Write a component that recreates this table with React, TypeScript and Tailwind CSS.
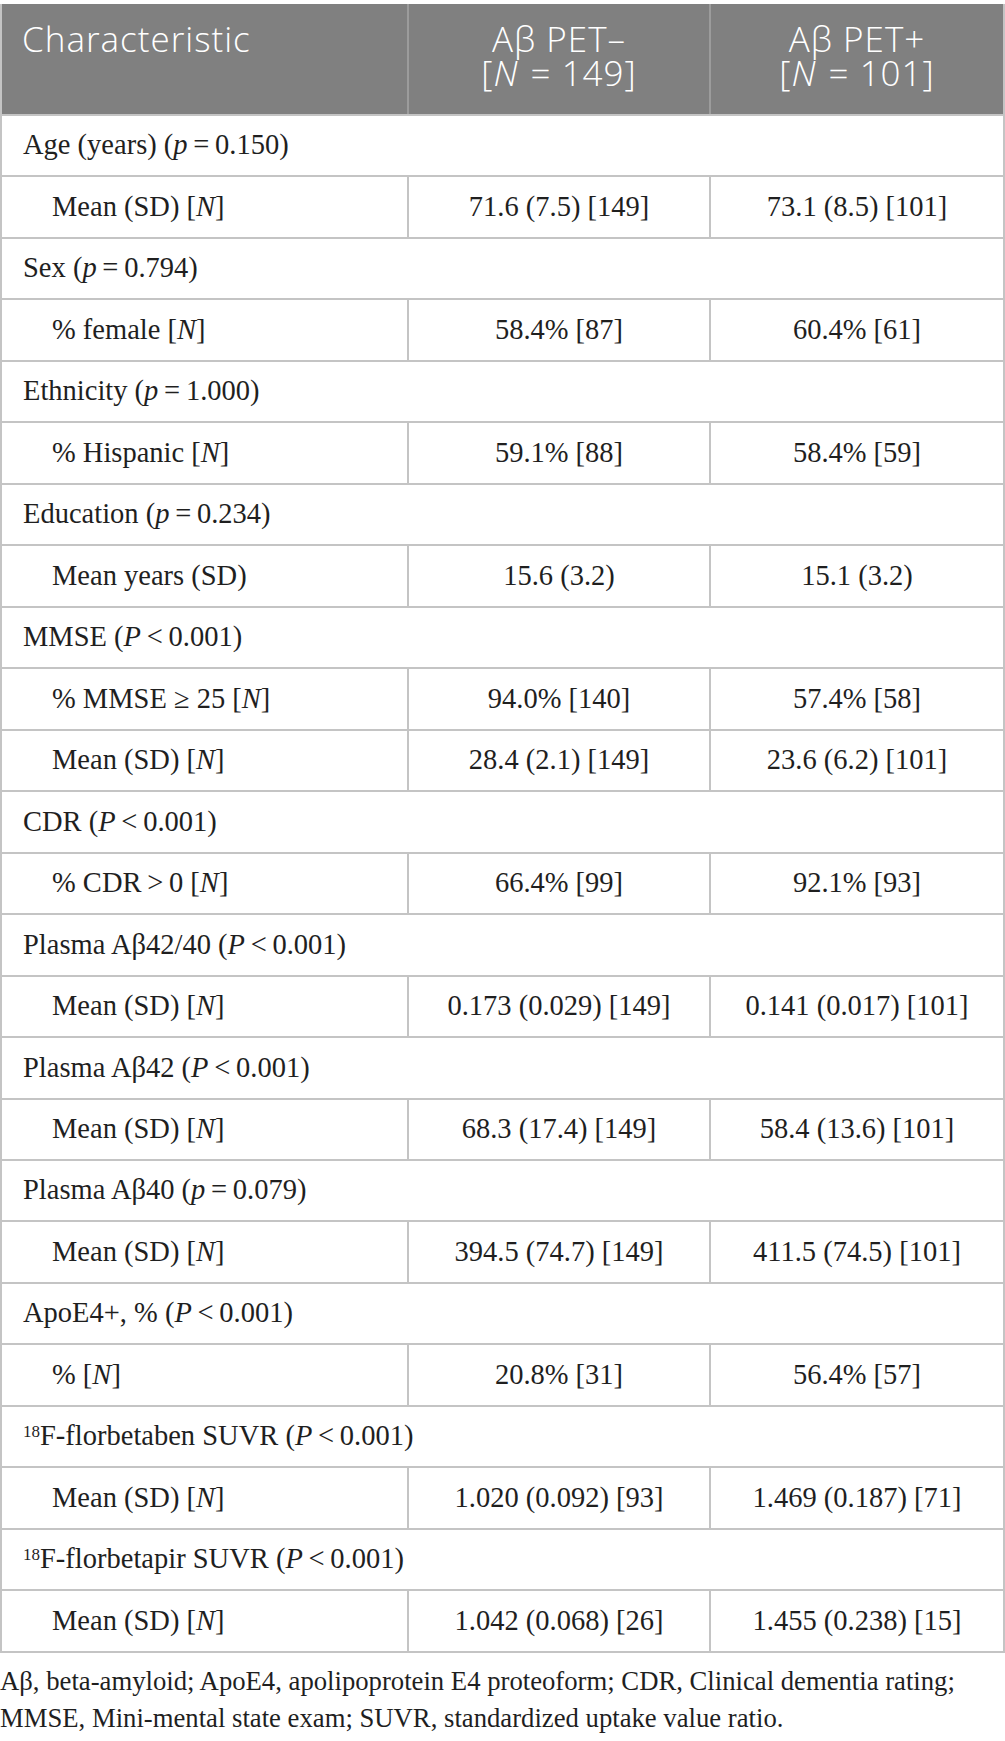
import React from "react";

type Row =
  | { kind: "group"; label: React.ReactNode }
  | { kind: "data"; label: React.ReactNode; neg: string; pos: string };

const T = "\u2009";

const P = ({ small }: { small?: boolean }) => <i>{small ? "p" : "P"}</i>;
const N = () => <i>N</i>;

const rows: Row[] = [
  { kind: "group", label: <>Age (years) (<P small />{T}={T}0.150)</> },
  { kind: "data", label: <>Mean (SD) [<N />]</>, neg: "71.6 (7.5) [149]", pos: "73.1 (8.5) [101]" },
  { kind: "group", label: <>Sex (<P small />{T}={T}0.794)</> },
  { kind: "data", label: <>% female [<N />]</>, neg: "58.4% [87]", pos: "60.4% [61]" },
  { kind: "group", label: <>Ethnicity (<P small />{T}={T}1.000)</> },
  { kind: "data", label: <>% Hispanic [<N />]</>, neg: "59.1% [88]", pos: "58.4% [59]" },
  { kind: "group", label: <>Education (<P small />{T}={T}0.234)</> },
  { kind: "data", label: <>Mean years (SD)</>, neg: "15.6 (3.2)", pos: "15.1 (3.2)" },
  { kind: "group", label: <>MMSE (<P />{T}&lt;{T}0.001)</> },
  { kind: "data", label: <>% MMSE ≥ 25 [<N />]</>, neg: "94.0% [140]", pos: "57.4% [58]" },
  { kind: "data", label: <>Mean (SD) [<N />]</>, neg: "28.4 (2.1) [149]", pos: "23.6 (6.2) [101]" },
  { kind: "group", label: <>CDR (<P />{T}&lt;{T}0.001)</> },
  { kind: "data", label: <>% CDR{T}&gt;{T}0 [<N />]</>, neg: "66.4% [99]", pos: "92.1% [93]" },
  { kind: "group", label: <>Plasma Aβ42/40 (<P />{T}&lt;{T}0.001)</> },
  { kind: "data", label: <>Mean (SD) [<N />]</>, neg: "0.173 (0.029) [149]", pos: "0.141 (0.017) [101]" },
  { kind: "group", label: <>Plasma Aβ42 (<P />{T}&lt;{T}0.001)</> },
  { kind: "data", label: <>Mean (SD) [<N />]</>, neg: "68.3 (17.4) [149]", pos: "58.4 (13.6) [101]" },
  { kind: "group", label: <>Plasma Aβ40 (<P small />{T}={T}0.079)</> },
  { kind: "data", label: <>Mean (SD) [<N />]</>, neg: "394.5 (74.7) [149]", pos: "411.5 (74.5) [101]" },
  { kind: "group", label: <>ApoE4+, % (<P />{T}&lt;{T}0.001)</> },
  { kind: "data", label: <>% [<N />]</>, neg: "20.8% [31]", pos: "56.4% [57]" },
  {
    kind: "group",
    label: (
      <>
        <sup className="text-[17px]">18</sup>F-florbetaben SUVR (<P />{T}&lt;{T}0.001)
      </>
    ),
  },
  { kind: "data", label: <>Mean (SD) [<N />]</>, neg: "1.020 (0.092) [93]", pos: "1.469 (0.187) [71]" },
  {
    kind: "group",
    label: (
      <>
        <sup className="text-[17px]">18</sup>F-florbetapir SUVR (<P />{T}&lt;{T}0.001)
      </>
    ),
  },
  { kind: "data", label: <>Mean (SD) [<N />]</>, neg: "1.042 (0.068) [26]", pos: "1.455 (0.238) [15]" },
];

const cols = "grid grid-cols-[405px_302px_1fr]";

export default function App() {
  return (
    <div className="w-[1005px] bg-white pt-[4px] font-['Liberation_Serif',serif] text-[#1f1f1f]">
      {/* Table */}
      <div className="border-x-2 border-[#c4c4c4]">
        {/* Header */}
        <div
          className={`${cols} h-[110px] bg-[#808080] font-['Open_Sans',sans-serif] text-[35px] font-light leading-[35px] tracking-[1px] text-white`}
        >
          <div className="pl-[20px] pt-[17px]">Characteristic</div>
          <div className="flex flex-col items-center gap-[0px] border-l-2 border-[#9c9c9c] pt-[17px]">
            <span>Aβ PET–</span>
            <span className="-mt-[1px]">
              [<i className="pr-[2px]">N</i> = 149]
            </span>
          </div>
          <div className="flex flex-col items-center gap-[0px] border-l-2 border-[#9c9c9c] pt-[17px]">
            <span>Aβ PET+</span>
            <span className="-mt-[1px]">
              [<i className="pr-[2px]">N</i> = 101]
            </span>
          </div>
        </div>

        {/* Body */}
        {rows.map((r, i) =>
          r.kind === "group" ? (
            <div
              key={i}
              className="flex h-[61.47px] items-center border-t-2 border-[#c4c4c4] pl-[21px] text-[28.5px] leading-none"
            >
              <span>{r.label}</span>
            </div>
          ) : (
            <div key={i} className={`${cols} h-[61.47px] border-t-2 border-[#c4c4c4] text-[28.5px] leading-none`}>
              <div className="flex items-center pl-[50px]">
                <span>{r.label}</span>
              </div>
              <div className="flex items-center justify-center border-l-2 border-[#c4c4c4]">{r.neg}</div>
              <div className="flex items-center justify-center border-l-2 border-[#c4c4c4]">{r.pos}</div>
            </div>
          )
        )}
        <div className="border-t-2 border-[#c4c4c4]" />
      </div>

      {/* Footnote */}
      <p className="mt-[10px] text-[26.7px] leading-[37px] text-[#1f1f1f]">
        Aβ, beta-amyloid; ApoE4, apolipoprotein E4 proteoform; CDR, Clinical dementia rating;
        <br />
        MMSE, Mini-mental state exam; SUVR, standardized uptake value ratio.
      </p>
    </div>
  );
}
